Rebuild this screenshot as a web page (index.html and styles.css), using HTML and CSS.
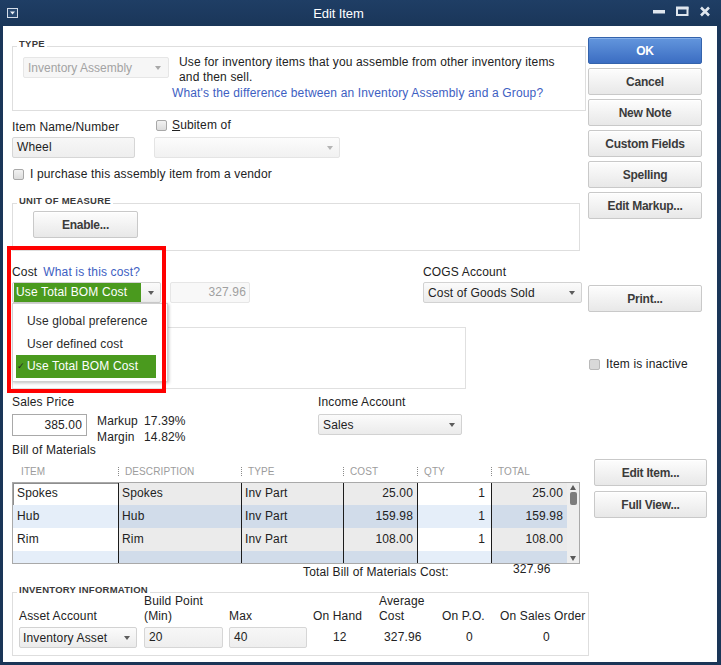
FILE: index.html
```html
<!DOCTYPE html>
<html lang="en">
<head>
<meta charset="utf-8">
<title>Edit Item</title>
<link rel="stylesheet" href="styles.css">
</head>
<body>
<div class="window">
  <header class="titlebar">
    <svg class="sys-icon" width="11" height="10" viewBox="0 0 11 10"><rect x="0.5" y="0.5" width="10" height="9" fill="#2a4a71" stroke="#d5dde8"/><path d="M3 3.5h5l-2.5 3z" fill="#eef2f7"/></svg>
    <div class="title">Edit Item</div>
    <svg class="controls" width="58" height="26" viewBox="0 0 58 26">
      <rect x="0" y="10" width="12" height="3.5" fill="#dfe6ee"/>
      <rect x="24" y="8" width="10.5" height="7" fill="none" stroke="#dfe6ee" stroke-width="2"/>
      <rect x="23" y="6.5" width="12.5" height="3" fill="#dfe6ee"/>
      <path d="M48 7.5l8 8M56 7.5l-8 8" stroke="#dfe6ee" stroke-width="2.6"/>
    </svg>
  </header>

  <main class="content">
    <section class="top">
      <div class="top-main">
        <div class="group group-type">
          <div class="group-title">TYPE</div>
          <div class="type-row">
            <div class="select select-disabled sel-type"><span>Inventory Assembly</span><span class="caret"></span></div>
            <div class="type-desc">
              <div class="desc-text">Use for inventory items that you assemble from other inventory items<br>and then sell.</div>
              <a class="link type-link">What's the difference between an Inventory Assembly and a Group?</a>
            </div>
          </div>
        </div>

        <div class="name-row">
          <div class="field f-name">
            <div class="lbl">Item Name/Number</div>
            <div class="input in-name">Wheel</div>
          </div>
          <div class="field f-sub">
            <div class="lbl check-lbl"><span class="checkbox"></span><span><u>S</u>ubitem of</span></div>
            <div class="select select-light sel-sub"><span></span><span class="caret caret-light"></span></div>
          </div>
        </div>

        <div class="check-row vendor-row"><span class="checkbox"></span><span>I purchase this assembly item from a vendor</span></div>

        <div class="group group-uom">
          <div class="group-title">UNIT OF MEASURE</div>
          <div class="btn btn-enable">Enable...</div>
        </div>
      </div>

      <div class="side">
        <div class="btn btn-ok">OK</div>
        <div class="btn">Cancel</div>
        <div class="btn">New Note</div>
        <div class="btn">Custom Fields</div>
        <div class="btn">Spellin<u>g</u></div>
        <div class="btn">Edit Markup...</div>
      </div>
    </section>

    <section class="cost-row">
      <div class="cost-main">
        <div class="cost-fields">
          <div class="field f-cost">
            <div class="lbl"><span>Cost</span><a class="link cost-link">What is this cost?</a></div>
            <div class="select select-green"><span class="green-fill">Use Total BOM Cost</span><span class="caret"></span></div>
          </div>
          <div class="input input-disabled cost-value">327.96</div>
          <div class="field f-cogs">
            <div class="lbl">COGS Account</div>
            <div class="select sel-cogs"><span>Cost of Goods Sold</span><span class="caret"></span></div>
          </div>
        </div>
        <div class="desc-box"></div>
      </div>
      <div class="cost-side">
        <div class="btn btn-print">Print...</div>
        <div class="check-row inactive-row"><span class="checkbox checkbox-dim"></span><span>Item is inactive</span></div>
      </div>

      <div class="menu">
        <div class="menu-item"><span class="mark"></span>Use global preference</div>
        <div class="menu-item"><span class="mark"></span>User defined cost</div>
        <div class="menu-item menu-item-on"><span class="mark">&#10003;</span>Use Total BOM Cost</div>
      </div>
      <div class="highlight"></div>
    </section>

    <section class="price-row">
      <div class="field f-sales">
        <div class="lbl">Sales Price</div>
        <div class="sales-line">
          <div class="input input-white in-price">385.00</div>
          <div class="markup">
            <span>Markup</span><span>17.39%</span>
            <span>Margin</span><span>14.82%</span>
          </div>
        </div>
      </div>
      <div class="field f-income">
        <div class="lbl">Income Account</div>
        <div class="select sel-income"><span>Sales</span><span class="caret"></span></div>
      </div>
    </section>

    <div class="bom-title">Bill of Materials</div>

    <section class="bom">
      <div class="bom-table">
        <div class="bom-head">
          <div class="h">ITEM</div>
          <div class="h">DESCRIPTION</div>
          <div class="h">TYPE</div>
          <div class="h">COST</div>
          <div class="h">QTY</div>
          <div class="h">TOTAL</div>
        </div>
        <div class="bom-body">
          <div class="bom-rows">
            <div class="bom-row odd r-first">
              <div class="c c-item c-focus">Spokes</div><div class="c">Spokes</div><div class="c">Inv Part</div><div class="c num">25.00</div><div class="c c-qty num">1</div><div class="c num">25.00</div>
            </div>
            <div class="bom-row even">
              <div class="c c-item">Hub</div><div class="c">Hub</div><div class="c">Inv Part</div><div class="c num">159.98</div><div class="c c-qty num">1</div><div class="c num">159.98</div>
            </div>
            <div class="bom-row odd">
              <div class="c c-item">Rim</div><div class="c">Rim</div><div class="c">Inv Part</div><div class="c num">108.00</div><div class="c c-qty num">1</div><div class="c num">108.00</div>
            </div>
            <div class="bom-row even r-last">
              <div class="c c-item"></div><div class="c"></div><div class="c"></div><div class="c"></div><div class="c c-qty"></div><div class="c"></div>
            </div>
          </div>
          <div class="scroll">
            <span class="arrow-up"></span>
            <span class="thumb"></span>
            <span class="scroll-space"></span>
            <span class="arrow-down"></span>
          </div>
        </div>
      </div>
      <div class="bom-side">
        <div class="btn">Edit Item...</div>
        <div class="btn">Full View...</div>
      </div>
    </section>

    <div class="total-row">
      <span class="total-lbl">Total Bill of Materials Cost:</span>
      <span class="total-val">327.96</span>
    </div>

    <section class="group group-inv">
      <div class="group-title">INVENTORY INFORMATION</div>
      <div class="inv-grid">
        <div class="ilbl"><span>Asset Account</span></div>
        <div class="ilbl"><span>Build Point<br>(Min)</span></div>
        <div class="ilbl"><span>Max</span></div>
        <div class="ilbl"><span>On Hand</span></div>
        <div class="ilbl"><span>Average<br>Cost</span></div>
        <div class="ilbl"><span>On P.O.</span></div>
        <div class="ilbl"><span>On Sales Order</span></div>

        <div class="select sel-asset"><span>Inventory Asset</span><span class="caret"></span></div>
        <div class="input in-build">20</div>
        <div class="input in-max">40</div>
        <div class="ival v-hand">12</div>
        <div class="ival v-avg">327.96</div>
        <div class="ival v-po">0</div>
        <div class="ival v-so">0</div>
      </div>
    </section>
  </main>
</div>
</body>
</html>
```

FILE: styles.css
```css
* { box-sizing: border-box; }
html, body { margin: 0; padding: 0; }
body {
  width: 721px;
  height: 665px;
  overflow: hidden;
  background: #1a3557;
  font-family: "Liberation Sans", Arial, sans-serif;
  font-size: 12px;
  letter-spacing: 0.15px;
  color: #222;
}
u { text-decoration: underline; }

.window {
  height: 665px;
  display: flex;
  flex-direction: column;
  background: linear-gradient(#1f3e65, #1a3659 26px, #1a3557);
}

/* title bar */
.titlebar {
  height: 26px;
  flex: none;
  display: flex;
  align-items: center;
  color: #fff;
}
.sys-icon { margin-left: 7px; margin-top: -1px; flex: none; }
.title {
  flex: 1;
  text-align: center;
  font-size: 13px;
  padding-left: 6px;
  letter-spacing: -0.1px;
}
.controls { flex: none; margin-right: 10px; }

.content {
  flex: 1;
  margin: 0 4px 3px 3px;
  background: #fff;
}

/* shared controls */
.lbl { line-height: 14px; white-space: nowrap; }
.link { color: #3d60c2; text-decoration: none; }

.group { border: 1px solid #dedede; }
.group-title {
  width: max-content;
  margin: -9px 0 0 4px;
  padding: 0 2px;
  background: #fff;
  font-size: 9.5px;
  font-weight: bold;
  line-height: 12px;
  letter-spacing: 0.25px;
  color: #3a3a3a;
}

.select {
  height: 21px;
  display: flex;
  align-items: center;
  justify-content: space-between;
  padding: 0 6px 0 4px;
  border: 1px solid #d2d2d2;
  border-radius: 2px;
  background: linear-gradient(#fbfbfb, #ebebeb);
  white-space: nowrap;
}
.caret {
  flex: none;
  width: 0;
  height: 0;
  border-left: 3.5px solid transparent;
  border-right: 3.5px solid transparent;
  border-top: 4px solid #5c5c5c;
}
.caret-light { border-top-color: #b5b5b5; }
.select-disabled {
  background: #f6f6f6;
  border-color: #e6e6e6;
  color: #a3a3a3;
  letter-spacing: 0;
}
.select-disabled .caret { border-top-color: #a8a8a8; }
.select-light {
  background: linear-gradient(#fcfcfc, #f1f1f1);
  border-color: #e4e4e4;
}

.input {
  height: 21px;
  line-height: 19px;
  padding: 0 4px;
  border: 1px solid #d6d6d6;
  border-radius: 2px;
  background: linear-gradient(#f7f7f7, #eeeeee);
  white-space: nowrap;
}
.input-disabled {
  background: #f8f8f8;
  border-color: #e6e6e6;
  color: #a0a0a0;
  text-align: right;
  padding-right: 3px;
}
.input-white {
  background: #fff;
  border-color: #a9a9a9;
  border-radius: 0;
  text-align: right;
  padding-right: 4px;
}

.checkbox {
  flex: none;
  width: 11px;
  height: 11px;
  border: 1px solid #a8a8a8;
  border-radius: 2px;
  background: linear-gradient(#f2f2f2, #dcdcdc);
}
.checkbox-dim { background: #d9d9d9; border-color: #b9b9b9; }
.check-row { display: flex; align-items: center; white-space: nowrap; }

.btn {
  height: 27px;
  display: flex;
  align-items: center;
  justify-content: center;
  border: 1px solid #c9c9c9;
  border-radius: 2px;
  background: linear-gradient(#fdfdfd, #e8e8e8);
  box-shadow: inset 0 1px 0 #fff;
  font-weight: bold;
  letter-spacing: -0.25px;
  color: #3b3b3b;
  white-space: nowrap;
}
.btn-ok {
  background: linear-gradient(#6396dd, #3b6dc2);
  border-color: #3463ac;
  box-shadow: inset 0 1px 0 #86b0ea;
  color: #fff;
}

/* top section */
.top { display: flex; align-items: flex-start; }
.top-main { margin-left: 9px; width: 574px; flex: none; }
.group-type { margin-top: 20px; height: 65px; }
.type-row { display: flex; align-items: flex-start; margin-top: 5px; }
.sel-type { width: 146px; margin: 2px 0 0 10px; padding-right: 7px; }
.type-desc { margin-left: 3px; line-height: 14.5px; white-space: nowrap; }
.desc-text { padding-left: 7px; }
.type-link { display: block; margin-top: 2px; }

.name-row { display: flex; margin-top: 9px; }
.f-name { width: 123px; }
.in-name { margin-top: 3px; }
.f-sub { width: 186px; margin-left: 19px; }
.check-lbl { display: flex; align-items: center; gap: 5px; padding-left: 2px; margin-top: -2px; height: 14px; }
.sel-sub { margin-top: 5px; }

.vendor-row { margin-top: 10px; height: 12px; padding-left: 1px; gap: 6px; }

.group-uom { margin-top: 23px; width: 568px; height: 48px; }
.btn-enable { width: 105px; margin: 4px 0 0 20px; }

.side {
  margin: 11px 0 0 2px;
  width: 114px;
  display: flex;
  flex-direction: column;
  gap: 4px;
}

/* cost section */
.cost-row { position: relative; display: flex; align-items: flex-start; }
.cost-main { margin-left: 9px; width: 570px; flex: none; }
.cost-fields { display: flex; align-items: flex-end; margin-top: 14px; }
.f-cost { width: 149px; flex: none; }
.cost-link { margin-left: 6px; }
.select-green { margin-top: 3px; padding: 0 6px 0 1px; }
.green-fill {
  display: block;
  width: 127px;
  height: 19px;
  line-height: 19px;
  padding-left: 2px;
  background: #4a9a1e;
  color: #fff;
}
.cost-value { width: 80px; margin-left: 9px; flex: none; }
.f-cogs { width: 159px; margin-left: 173px; flex: none; }
.sel-cogs { margin-top: 3px; }
.desc-box { margin-top: 24px; width: 454px; height: 62px; border: 1px solid #e0e0e0; }

.cost-side { margin-left: 6px; width: 114px; flex: none; }
.btn-print { margin-top: 34px; }
.inactive-row { margin-top: 45px; height: 14px; padding-left: 1px; gap: 6px; }

.menu {
  position: absolute;
  left: 9px;
  top: 52px;
  width: 156px;
  height: 79px;
  padding: 6px 0 0 3px;
  background: #fff;
  border: 1px solid #d0d0d0;
  box-shadow: 1px 1px 3px rgba(0, 0, 0, 0.25);
  z-index: 2;
}
.menu-item {
  width: 140px;
  height: 22.7px;
  line-height: 22.7px;
  display: flex;
  align-items: center;
  white-space: nowrap;
  color: #2a2a2a;
}
.mark {
  display: inline-block;
  width: 11px;
  flex: none;
  font-size: 9px;
  color: #222;
  padding-left: 1px;
}
.menu-item-on { background: #4a9a1e; color: #fff; }

.highlight {
  position: absolute;
  left: 4px;
  top: -5px;
  width: 159px;
  height: 147px;
  border: 4px solid #ff0000;
  z-index: 3;
}

/* price section */
.price-row { display: flex; margin-left: 9px; height: 54px; padding-top: 6px; }
.f-sales { width: 306px; flex: none; }
.sales-line { display: flex; align-items: flex-start; margin-top: 5px; }
.in-price { width: 75px; height: 22px; line-height: 20px; }
.markup {
  display: grid;
  grid-template-columns: 47px auto;
  line-height: 16px;
  margin: -1px 0 0 10px;
  white-space: nowrap;
}
.f-income { width: 144px; }
.sel-income { margin-top: 5px; }

.bom-title { margin-left: 9px; line-height: 14px; }

/* bill of materials */
.bom { display: flex; align-items: flex-start; margin-left: 9px; }
.bom-table { width: 568px; flex: none; }
.bom-head {
  margin-top: 5px;
  height: 18px;
  padding-left: 1px;
  display: grid;
  grid-template-columns: 105px 123px 102px 74px 74px 76px;
}
.h {
  display: flex;
  align-items: center;
  font-size: 10px;
  letter-spacing: 0.1px;
  color: #9c9c9c;
  white-space: nowrap;
}
.h::before {
  content: "";
  width: 0;
  height: 9px;
  border-left: 1px dotted #8a8a8a;
  margin-right: 6px;
}
.h:first-child { padding-left: 8px; }
.h:first-child::before { display: none; }

.bom-body {
  margin-top: 2px;
  display: flex;
  border: 1px solid #a9a9a9;
}
.bom-rows { width: 554px; flex: none; }
.bom-row {
  display: grid;
  grid-template-columns: 105px 123px 102px 74px 74px 76px;
  height: 23px;
  line-height: 23px;
}
.bom-row.r-first { height: 22px; line-height: 21px; }
.bom-row.r-last { height: 12px; }
.c {
  padding: 0 4px 0 3px;
  border-left: 1px solid #1c1c1c;
  white-space: nowrap;
  overflow: hidden;
}
.c.c-item { border-left: 0; padding-left: 4px; }
.num { text-align: right; }
.c-qty.num { padding-right: 6px; }
.odd .c { background: #ebebeb; }
.odd .c-item, .odd .c-qty { background: #fff; }
.even .c { background: #d1dcea; }
.even .c-item, .even .c-qty { background: #e5eef9; }
.c-focus { box-shadow: inset 1px 1px 0 #8e8e8e; }

.scroll {
  width: 12px;
  flex: none;
  display: flex;
  flex-direction: column;
  align-items: center;
  background: #eeeeee;
}
.arrow-up {
  margin-top: 2px;
  width: 0;
  height: 0;
  border-left: 3.5px solid transparent;
  border-right: 3.5px solid transparent;
  border-bottom: 5px solid #5a5a5a;
}
.thumb {
  margin-top: 2px;
  width: 7px;
  height: 13px;
  border-radius: 2px;
  background: #7c7c7c;
}
.scroll-space { flex: 1; }
.arrow-down {
  margin-bottom: 2px;
  width: 0;
  height: 0;
  border-left: 3.5px solid transparent;
  border-right: 3.5px solid transparent;
  border-top: 5px solid #5a5a5a;
}

.bom-side {
  margin: 2px 0 0 14px;
  width: 113px;
  display: flex;
  flex-direction: column;
  gap: 5px;
}

.total-row {
  display: flex;
  align-items: flex-start;
  margin: 1px 0 0 300px;
  height: 14px;
  line-height: 14px;
  white-space: nowrap;
}
.total-lbl { width: 210px; flex: none; }
.total-val { margin-top: -3px; }

/* inventory information */
.group-inv { margin: 13px 0 0 9px; width: 577px; height: 64px; }
.inv-grid {
  display: grid;
  grid-template-columns: 125px 85px 84px 66px 63px 58px auto;
  row-gap: 3px;
  margin: -2px 0 0 6px;
}
.ilbl {
  height: 30px;
  display: flex;
  align-items: flex-end;
  line-height: 15px;
  white-space: nowrap;
}
.sel-asset { width: 118px; padding-left: 3px; }
.in-build { width: 79px; }
.in-max { width: 78px; }
.ival { line-height: 21px; white-space: nowrap; }
.v-hand { padding-left: 20px; }
.v-avg { padding-left: 5px; }
.v-po { padding-left: 24px; }
.v-so { padding-left: 43px; }
```
